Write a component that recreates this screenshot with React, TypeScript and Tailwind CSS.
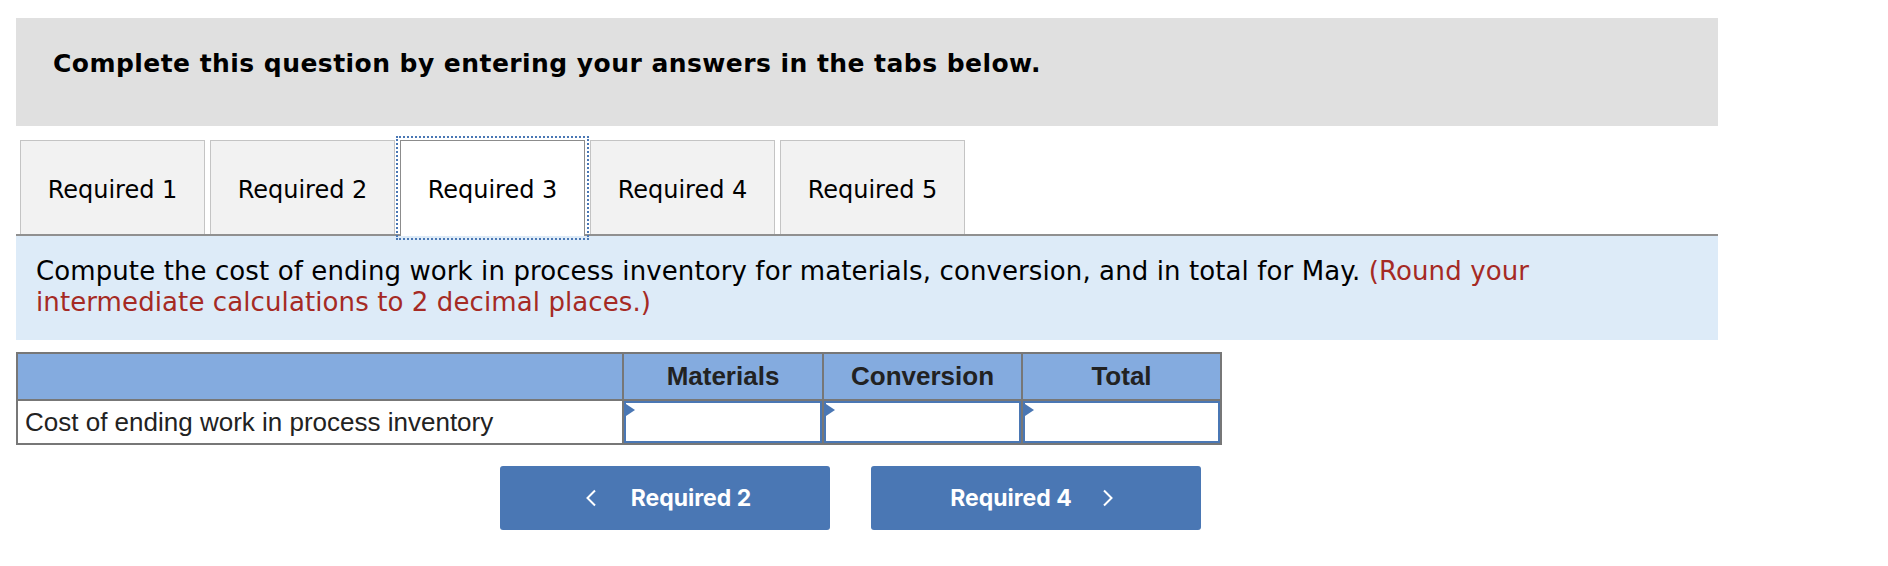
const verdana = { fontFamily: '"DejaVu Sans", Verdana, sans-serif' }
const arial = { fontFamily: '"Liberation Sans", Arial, sans-serif' }
const inter = { fontFamily: 'Inter, "Liberation Sans", sans-serif' }

const tabs = ['Required 1', 'Required 2', 'Required 3', 'Required 4', 'Required 5']

function AnswerCell({ width }: { width: string }) {
  return (
    <div className={`${width} border-l-2 border-[#777] h-full`}>
      <div className="relative h-full border-2 border-[#4a77b4] bg-white">
        <div className="absolute left-0 top-[1px] w-0 h-0 border-y-[6px] border-y-transparent border-l-[9px] border-l-[#4a77b4]" />
      </div>
    </div>
  )
}

export default function App() {
  return (
    <div className="w-[1888px] h-[566px] bg-white pl-4 pt-[18px]" style={verdana}>
      <div className="w-[1702px]">
        {/* instructions banner */}
        <div className="h-[108px] bg-[#e0e0e0] pl-[37px] pt-[31px]">
          <p className="text-[25px] leading-[29px] tracking-[0.45px] font-bold text-black">
            Complete this question by entering your answers in the tabs below.
          </p>
        </div>

        {/* tabs */}
        <div className="mt-[14px] flex items-start gap-[5px] pl-[4px] border-b-2 border-[#909090]">
          {tabs.map((t, i) =>
            i === 2 ? (
              <div
                key={t}
                className="relative z-10 w-[185px] h-[96px] -mb-[2px] pb-[2px] bg-white border border-b-0 border-[#8c8c8c] outline-2 outline-dotted outline-offset-2 outline-[#4a77b4] flex items-center justify-center pt-[5px] text-[24px] leading-[28px] text-black"
              >
                {t}
              </div>
            ) : (
              <div
                key={t}
                className="w-[185px] h-[94px] bg-[#f2f2f2] border border-b-0 border-[#c4c4c4] flex items-center justify-center pt-[5px] text-[24px] leading-[28px] text-black"
              >
                {t}
              </div>
            )
          )}
        </div>

        {/* question text */}
        <div className="h-[104px] bg-[#ddebf8] pl-[20px] pt-[20px] text-[26px] leading-[31px] tracking-[0.1px] text-black">
          Compute the cost of ending work in process inventory for materials, conversion, and in total for May.{' '}
          <span className="text-[#a52a24]">
            (Round your
            <br />
            intermediate calculations to 2 decimal places.)
          </span>
        </div>

        {/* answer table */}
        <div className="mt-[12px] w-[1206px] border-2 border-[#777]" style={arial}>
          <div className="flex h-[45px] bg-[#84abdf] text-[26px] font-bold text-[#222]">
            <div className="w-[604px]" />
            <div className="w-[200px] border-l-2 border-[#777] flex items-center justify-center">Materials</div>
            <div className="w-[199px] border-l-2 border-[#777] flex items-center justify-center">Conversion</div>
            <div className="w-[199px] border-l-2 border-[#777] flex items-center justify-center">Total</div>
          </div>
          <div className="flex h-[44px] border-t-2 border-[#777]">
            <div className="w-[604px] flex items-center pl-[7px] text-[26px] text-[#222]">
              Cost of ending work in process inventory
            </div>
            <AnswerCell width="w-[200px]" />
            <AnswerCell width="w-[199px]" />
            <AnswerCell width="w-[199px]" />
          </div>
        </div>

        {/* navigation */}
        <div className="mt-[21px] ml-[484px] flex gap-[41px]" style={inter}>
          <button className="w-[330px] h-[64px] rounded-[3px] bg-[#4a77b4] text-white text-[23px] font-bold flex items-center justify-center gap-[34px] pl-[6px]">
            <svg width="12" height="18" viewBox="0 0 12 18" fill="none">
              <path d="M10 1.5L2.5 9L10 16.5" stroke="white" strokeWidth="2" />
            </svg>
            <span>Required 2</span>
          </button>
          <button className="w-[330px] h-[64px] rounded-[3px] bg-[#4a77b4] text-white text-[23px] font-bold flex items-center justify-center gap-[30px] pr-[8px]">
            <span>Required 4</span>
            <svg width="12" height="18" viewBox="0 0 12 18" fill="none">
              <path d="M2 1.5L9.5 9L2 16.5" stroke="white" strokeWidth="2" />
            </svg>
          </button>
        </div>
      </div>
    </div>
  )
}
